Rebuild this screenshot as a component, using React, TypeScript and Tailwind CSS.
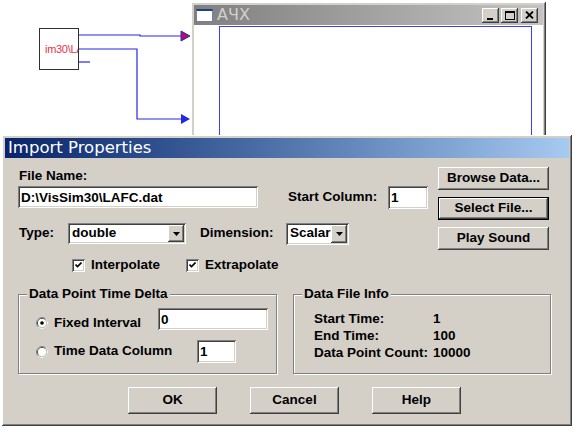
import type { ReactNode } from "react";

const raised =
  "bg-[#d4d0c8] shadow-[inset_-1px_-1px_0_#404040,inset_1px_1px_0_#ffffff,inset_-2px_-2px_0_#808080,inset_2px_2px_0_#d4d0c8]";
const sunken =
  "bg-white shadow-[inset_1px_1px_0_#808080,inset_-1px_-1px_0_#ffffff,inset_2px_2px_0_#404040,inset_-2px_-2px_0_#d4d0c8]";

function Btn({ children, def = false, className = "" }: { children: ReactNode; def?: boolean; className?: string }) {
  if (def) {
    return (
      <div className={`border border-black ${className}`}>
        <div className={`${raised} h-full w-full flex items-center justify-center`}>{children}</div>
      </div>
    );
  }
  return <div className={`${raised} flex items-center justify-center ${className}`}>{children}</div>;
}

function Field({ value, className = "" }: { value: string; className?: string }) {
  return (
    <input
      readOnly
      value={value}
      className={`${sunken} pl-[3px] pr-1 outline-none font-bold text-[13.5px] text-black font-['Liberation_Sans',Arial,sans-serif] ${className}`}
    />
  );
}

function Arrow() {
  return (
    <svg width="7" height="4" viewBox="0 0 7 4" aria-hidden>
      <path d="M0 0h7L3.5 4z" fill="#000" />
    </svg>
  );
}

function Combo({ value, className = "" }: { value: string; className?: string }) {
  return (
    <div className={`${sunken} flex items-stretch p-[2px] ${className}`}>
      <div className="flex-1 pl-[2px] flex items-center overflow-hidden whitespace-nowrap">{value}</div>
      <div className={`${raised} w-[16px] flex items-center justify-center`}>
        <Arrow />
      </div>
    </div>
  );
}

function Check({ label, className = "" }: { label: string; className?: string }) {
  return (
    <div className={`flex items-center gap-[6px] ${className}`}>
      <div className={`${sunken} w-[13px] h-[13px] flex items-center justify-center`}>
        <svg width="7" height="7" viewBox="0 0 7 7" aria-hidden>
          <path d="M0.5 2.5l2 2 4-4" fill="none" stroke="#000" strokeWidth="1.6" />
        </svg>
      </div>
      <span>{label}</span>
    </div>
  );
}

function Radio({ checked = false }: { checked?: boolean }) {
  return (
    <svg width="12" height="12" viewBox="0 0 12 12" aria-hidden>
      <circle cx="6" cy="6" r="5.5" fill="#fff" stroke="#808080" />
      <circle cx="6" cy="6" r="4.5" fill="none" stroke="#404040" />
      <path d="M2.1 9.9A5.5 5.5 0 0 0 9.9 2.1" fill="none" stroke="#fff" />
      <path d="M2.8 9.2A4.5 4.5 0 0 0 9.2 2.8" fill="none" stroke="#d4d0c8" />
      <circle cx="6" cy="6" r="4" fill="#fff" />
      {checked && <circle cx="6" cy="6" r="1.8" fill="#000" />}
    </svg>
  );
}

function Group({ title, children, className = "" }: { title: string; children: ReactNode; className?: string }) {
  return (
    <div className={`relative border border-[#808080] shadow-[inset_1px_1px_0_#ffffff,1px_1px_0_#ffffff] h-[80px] ${className}`}>
      <span className="absolute -top-[9px] left-[8px] px-[2px] bg-[#d4d0c8] leading-4">{title}</span>
      {children}
    </div>
  );
}

function Diagram() {
  return (
    <div className="absolute left-0 top-0 w-[192px] h-[135px]">
      <div className="absolute left-[39px] top-[28px] w-[40px] h-[42px] bg-white border border-[#303030] overflow-hidden">
        <span className="absolute left-[5px] top-[14px] whitespace-nowrap text-[11px] leading-3 font-normal tracking-[-0.3px] text-[#e8324a]">
          im30\LA
        </span>
      </div>
      <svg width="192" height="135" viewBox="0 0 192 135" className="absolute left-0 top-0" aria-hidden>
        <g stroke="#2626e8" strokeWidth="1.2" fill="none">
          <path d="M79 35H140V36H182" />
          <path d="M79 49H137V119H182" />
          <path d="M79 62H90" />
        </g>
        <path d="M181 31L190 36L181 41Z" fill="#b0105a" stroke="#2626e8" />
        <path d="M181 114L190 119L181 124Z" fill="#2626e8" />
      </svg>
    </div>
  );
}

function ChartWindow() {
  return (
    <div className={`absolute left-[191px] top-[2px] w-[355px] h-[200px] p-[3px] ${raised}`}>
      <div className="h-[20px] bg-linear-to-r from-[#808080] to-[#c4c4c4] flex items-center pl-[2px] pr-[2px]">
        <div className="w-[17px] h-[13px] bg-white border border-[#7080a8] border-t-2 border-t-[#203c8c]" />
        <span className="ml-[4px] text-[16px] leading-5 font-normal text-[#d4d0c8] font-['DejaVu_Sans',sans-serif]">АЧХ</span>
        <div className="ml-auto flex items-center">
          <Btn className="w-[17px] h-[15px]">
            <div className="w-[6px] h-[2px] bg-black mt-[7px] -ml-[2px]" />
          </Btn>
          <Btn className="w-[17px] h-[15px] ml-[2px]">
            <div className="w-[10px] h-[9px] border border-black border-t-2" />
          </Btn>
          <Btn className="w-[17px] h-[15px] ml-[3px] mr-[3px]">
            <svg width="9" height="8" viewBox="0 0 9 8" aria-hidden>
              <path d="M1 0.5L8 7.5M8 0.5L1 7.5" stroke="#000" strokeWidth="1.8" />
            </svg>
          </Btn>
        </div>
      </div>
      <div className="bg-white h-[174px] pt-[1px] pl-[25px]">
        <div className="w-[313px] h-full border border-[#3c3cff]" />
      </div>
    </div>
  );
}

export default function App() {
  return (
    <div className="relative w-[576px] h-[432px] bg-white overflow-hidden font-['Liberation_Sans',Arial,sans-serif] font-bold text-[13.5px] text-black">
      <Diagram />
      <ChartWindow />

      <div className={`absolute left-[2px] top-[135px] w-[570px] h-[291px] p-[3px] ${raised}`}>
        <div className="h-[20px] bg-linear-to-r from-[#0a246a] to-[#a6caf0] flex items-center pl-[3px] text-white font-normal text-[16.5px] font-['DejaVu_Sans',sans-serif]">
          Import Properties
        </div>

        <div className="pl-[13px]">
          <div className="flex">
            <div className="w-[420px] pt-[10px]">
              <div className="h-4 leading-4 pl-[1px]">File Name:</div>
              <div className="mt-[1px] h-[24px] flex items-center">
                <Field value="D:\VisSim30\LAFC.dat" className="w-[240px] h-[22px]" />
                <span className="ml-[30px] w-[100px]">Start Column:</span>
                <Field value="1" className="w-[40px] h-[23px]" />
              </div>
              <div className="mt-[14px] h-[21px] flex items-center">
                <span className="w-[50px] pl-[1px]">Type:</span>
                <Combo value="double" className="w-[118px] h-[21px]" />
                <span className="ml-[14px] w-[86px]">Dimension:</span>
                <Combo value="Scalar" className="w-[63px] h-[22px]" />
              </div>
              <div className="mt-[13px] h-[16px] flex items-center">
                <Check label="Interpolate" className="ml-[54px] w-[114px]" />
                <Check label="Extrapolate" />
              </div>
            </div>
            <div className="pt-[9px] flex flex-col gap-[7px]">
              <Btn className="w-[111px] h-[23px]">Browse Data...</Btn>
              <Btn def className="w-[111px] h-[23px]">Select File...</Btn>
              <Btn className="w-[111px] h-[23px]">Play Sound</Btn>
            </div>
          </div>

          <div className="mt-[21px] flex gap-[16px]">
            <Group title="Data Point Time Delta" className="w-[259px]">
              <div className="pl-[17px] pt-[13px]">
                <div className="flex items-start">
                  <div className="w-[122px] mt-[7px] h-4 flex items-center gap-[6px]">
                    <Radio checked />
                    <span>Fixed Interval</span>
                  </div>
                  <Field value="0" className="w-[110px] h-[22px]" />
                </div>
                <div className="mt-[9px] flex items-center">
                  <div className="w-[161px] h-4 flex items-center gap-[6px]">
                    <Radio />
                    <span>Time Data Column</span>
                  </div>
                  <Field value="1" className="w-[39px] h-[23px]" />
                </div>
              </div>
            </Group>
            <Group title="Data File Info" className="w-[258px]">
              <div className="pl-[20px] pt-[15px] leading-[17px]">
                {[
                  ["Start Time:", "1"],
                  ["End Time:", "100"],
                  ["Data Point Count:", "10000"],
                ].map(([k, v]) => (
                  <div key={k} className="flex">
                    <span className="w-[119px]">{k}</span>
                    <span>{v}</span>
                  </div>
                ))}
              </div>
            </Group>
          </div>

          <div className="mt-[13px] flex gap-[33px] pl-[110px]">
            <Btn className="w-[89px] h-[27px]">OK</Btn>
            <Btn className="w-[89px] h-[27px]">Cancel</Btn>
            <Btn className="w-[89px] h-[27px]">Help</Btn>
          </div>
        </div>
      </div>
    </div>
  );
}
